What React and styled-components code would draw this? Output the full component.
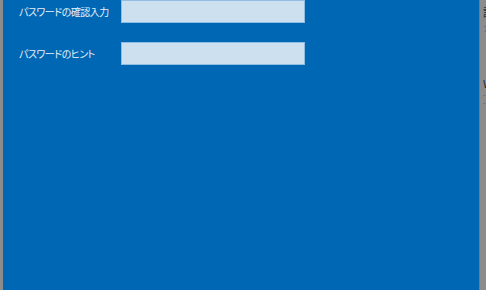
import React from "react";
import styled, { createGlobalStyle } from "styled-components";

const GlobalStyle = createGlobalStyle`
  html, body {
    margin: 0;
    padding: 0;
    background: #8c8c8c;
    overflow: hidden;
  }
`;

const Page = styled.div`
  display: flex;
  width: 486px;
  height: 290px;
  background-color: #8c8c8c;
  font-family: "Noto Sans CJK JP", "Noto Sans", sans-serif;
`;

const LeftEdge = styled.div`
  width: 3px;
  flex-shrink: 0;
`;

const Panel = styled.div`
  width: 477px;
  flex-shrink: 0;
  background-color: #0067b4;
  border-right: 1px solid #3f8bc6;
  box-sizing: border-box;
  display: flex;
  flex-direction: column;
  gap: 19px;
  padding: 0 0 0 16px;
`;

const Row = styled.div`
  display: flex;
  align-items: center;
`;

const Label = styled.div`
  width: 102px;
  color: #e6eff8;
  font-size: 10px;
  font-feature-settings: "palt";
  letter-spacing: -0.5px;
  white-space: nowrap;
`;

const Field = styled.input`
  width: 184px;
  height: 23px;
  box-sizing: border-box;
  margin: 0;
  border: 1px solid #8fbde3;
  background-color: #cce0f0;
  outline: none;
`;

const Side = styled.div`
  flex: 1;
  overflow: hidden;
  padding: 4px 0 0 3px;
  display: flex;
  flex-direction: column;
  font-size: 11px;
  white-space: nowrap;
`;

const SideTitle = styled.div`
  color: #2b2b2b;
  height: ${(p) => p.h}px;
  line-height: ${(p) => p.h}px;
`;

const SideLink = styled.div`
  color: #1f5f9f;
  font-size: 7px;
  height: ${(p) => p.h}px;
  line-height: ${(p) => p.h}px;
  overflow: hidden;
`;

export default function App() {
  return (
    <>
      <GlobalStyle />
      <Page>
        <LeftEdge />
        <Panel>
          <Row>
            <Label>パスワードの確認入力</Label>
            <Field type="password" />
          </Row>
          <Row>
            <Label>パスワードのヒント</Label>
            <Field type="text" />
          </Row>
        </Panel>
        <Side>
          <SideTitle h={16}>設定</SideTitle>
          <SideLink h={16}>ア</SideLink>
          <SideLink h={40} />
          <SideTitle h={14}>W</SideTitle>
          <SideLink h={8}>-</SideLink>
          <SideLink h={8}>-</SideLink>
        </Side>
      </Page>
    </>
  );
}
